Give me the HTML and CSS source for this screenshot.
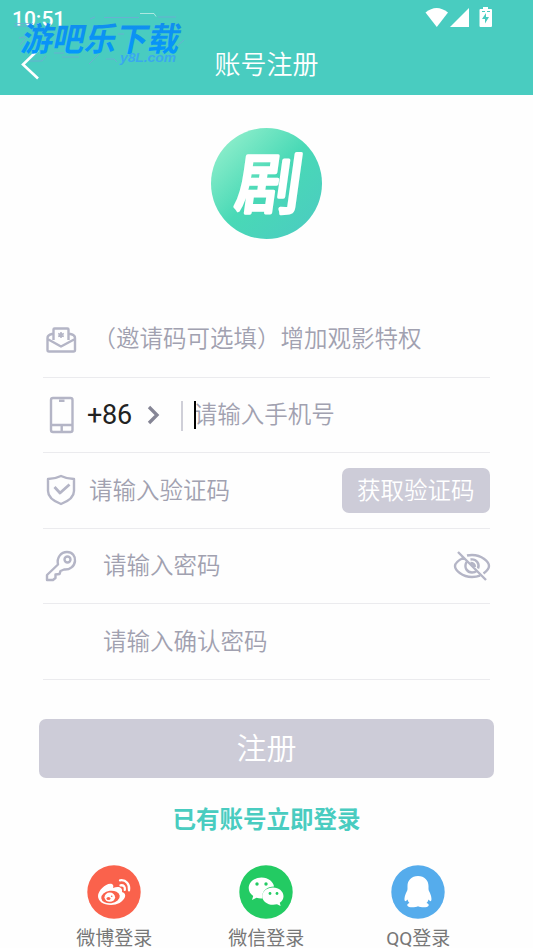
FILE: index.html
```html
<!DOCTYPE html>
<html lang="zh-CN">
<head>
<meta charset="utf-8">
<title>账号注册</title>
<link rel="stylesheet" href="styles.css">
</head>
<body>
<header class="header">
  <div class="status">
    <span class="time">10:51</span>
    <svg class="status-icons" width="68" height="22" viewBox="425 6 68 22" fill="#fff">
      <path d="M425.500 12.600Q436.500 3.500 448 12.600L436.800 27Z"/>
      <path d="M469 8v19h-19Z"/>
      <path fill-rule="evenodd" d="M483 7h5v2h3q1 0 1 1v16q0 1-1 1h-10.500q-1 0-1-1v-16q0-1 1-1h2.500ZM486 13l-4 6h3v4.500l4-6.500h-3ZM482 11v1h3v-1ZM487 11v1h3v-1Z"/>
    </svg>
  </div>
  <div class="titlebar">
    <svg class="back" width="20" height="32" viewBox="0 0 20 32" fill="none" stroke="#fff" stroke-width="2.600"><path d="M18 2 3 16.500 18 30.500"/></svg>
    <h1>账号注册</h1>
  </div>
  <div class="watermark">
    <svg width="240" height="80" viewBox="0 0 240 80">
      <defs><linearGradient id="wm" x1="0" y1="0" x2="0" y2="1"><stop offset="0" stop-color="#168be9"/><stop offset="1" stop-color="#0099ff"/></linearGradient></defs>
      <g fill="none" stroke="#71a8d5" stroke-width=".8"><path d="M15 23.500h18M14 26h15M19 38l6-1M20 45l6-7M30 61h12l4-5M90 19l5-2M104 17.500h35M158 17h18M177 46l7-6M62 57h17M89 64l10-10M106 59h8l3 3M54 53h10M118 34h6"/><path stroke="#c6eee8" d="M140 13.500h14l2 3"/></g>
      <text class="wm-name" transform="translate(20 50.500) skewX(-12)" textLength="158" lengthAdjust="spacingAndGlyphs" fill="url(#wm)">游吧乐下载</text>
      <text class="wm-site" x="120" y="61.500" textLength="56" lengthAdjust="spacingAndGlyphs">y8L.com</text>
    </svg>
  </div>
</header>
<main>
  <div class="logo">
    <svg width="111" height="111" viewBox="0 0 111 111">
      <defs><linearGradient id="lg" x1=".12" y1=".12" x2=".88" y2=".88"><stop offset="0" stop-color="#8bedca"/><stop offset=".5" stop-color="#49d9b6"/><stop offset="1" stop-color="#4bcebf"/></linearGradient></defs>
      <circle cx="55.500" cy="55.500" r="55.500" fill="url(#lg)"/>
      <text class="logo-text" transform="translate(22 80) skewX(-8)">剧</text>
    </svg>
  </div>
  <form class="form">
    <div class="row invite">
      <svg class="icon" width="36" height="36" viewBox="43 321 36 36"><path d="M53.500 340v-10.500q0-1 1-1h13q1 0 1 1v10.500M53 334h-1q-4.500 1-4.500 4v12q0 1.500 1.500 1.500h24.500q1.500 0 1.500-1.500v-12q0-3-4.500-4h-1M47.500 339l13.500 7.500 14-7.500"/><path stroke-width="1.600" d="M61 332v6M58.200 333.500l5.600 3M63.800 333.500l-5.600 3"/></svg>
      <span class="hint">（邀请码可选填）增加观影特权</span>
    </div>
    <div class="row phone">
      <svg class="icon" width="36" height="40" viewBox="44 395 36 40"><rect x="52" y="398" width="21.500" height="34" rx="2"/><path d="M52 425h21.500M60 400.700h5.500M62.700 426v5"/></svg>
      <span class="code">+86</span>
      <svg class="chev" width="14" height="20" viewBox="0 0 14 20"><path d="M2 2 10 10 2 18"/></svg>
      <span class="sep"></span><span class="caret"></span>
      <span class="hint">请输入手机号</span>
    </div>
    <div class="row verify">
      <svg class="icon" width="36" height="36" viewBox="43 473 36 36"><path d="M61 477q6 3 13 3v12q0 8-13 13-13-5-13-13v-12q7 0 13-3Z"/><path stroke-width="2.800" d="m54.500 488 5.500 6 9.500-8.500"/></svg>
      <span class="hint">请输入验证码</span>
      <button type="button" class="get">获取验证码</button>
    </div>
    <div class="row pass">
      <svg class="icon" width="36" height="36" viewBox="43 548 36 36"><path d="M58 564.500c-1.500-7 3-12.500 9-12.500 5.500 0 8.500 4.500 8 9-.5 5-5 9-11 8.500l-3.500 1.500-1 3-4 .5v3.500l-2.500 2h-6v-5Z"/><circle cx="67.500" cy="559.500" r="3"/></svg>
      <span class="hint">请输入密码</span>
      <svg class="icon eye" width="38" height="34" viewBox="453 549 38 34"><path d="M464 557.500c-5 2.500-9 6-9 8.500 0 4 7 11 17 11q4.500 0 8-1.300M467 555.500q2-.5 5-.5c10 0 17 7 17 11q0 3.500-5.500 7.500M466.500 562c-3 6 1 10.500 5.500 10.500q3 0 4.500-1.500M470.500 559.500c6-1 9.500 4.500 7.500 9M470.500 563q4 0 4.500 4M458 552l28 28"/></svg>
    </div>
    <div class="row confirm"><span class="hint">请输入确认密码</span></div>
    <button type="button" class="submit">注册</button>
  </form>
  <a class="login">已有账号立即登录</a>
  <div class="social">
    <div class="item">
      <svg width="54" height="54" viewBox="0 0 54 54"><circle cx="27" cy="27" r="26.700" fill="#fa624c"/><path fill="#fff" d="M11 31c0-6 9-14 14-12q2 1 1 4c5-2 10-1 9 4q4 1 3 5c-2 5-8 8-14 8-8 0-13-4-13-9Z"/><ellipse cx="23.500" cy="32" rx="9.300" ry="6.300" fill="#fa624c" transform="rotate(-7 23.500 32)"/><ellipse cx="22.800" cy="32.200" rx="5.300" ry="4.600" fill="#fff"/><ellipse cx="21.500" cy="33.500" rx="2" ry="1.600" fill="#fa624c"/><circle cx="24.700" cy="31.200" r=".8" fill="#fa624c"/><path fill="none" stroke="#fff" stroke-width="2.300" stroke-linecap="round" d="M33 15.300c6-1 10 4 9 10M33.500 20.300q5-.5 4.300 4.500"/></svg>
      <span>微博登录</span>
    </div>
    <div class="item">
      <svg width="54" height="54" viewBox="0 0 54 54"><circle cx="27" cy="27" r="26.700" fill="#23cb63"/><path fill="#fff" d="M22.500 12.500c7 0 12 4.500 12.500 9-7 0-13 5-11.500 12q-3 .3-6-.7l-4.500 2.200 1.200-4c-3-2-4.500-5-4.500-8 0-6 6-10.500 12.800-10.500Z"/><path fill="#fff" d="M34 22.500c6 0 10.500 4 10.500 8.700 0 3-1.500 5-3.700 6.500l.8 3.300-3.600-1.700c-8 2-14.800-2.500-14.800-8.100 0-4.700 4.800-8.700 10.800-8.700Z"/><g fill="#23cb63"><circle cx="18" cy="19" r="1.700"/><circle cx="27" cy="19" r="1.700"/><circle cx="31" cy="28.500" r="1.400"/><circle cx="38" cy="28.500" r="1.400"/></g></svg>
      <span>微信登录</span>
    </div>
    <div class="item">
      <svg width="54" height="54" viewBox="0 0 54 54"><circle cx="27" cy="27" r="26.700" fill="#55acec"/><path fill="#fff" d="M27 11c6.500 0 10.500 4.500 10.500 10v3q0 1.500 1 3c2 4 2.500 8 1.500 9-.8.500-1.800-.5-2.500-1.500q-.5 2-2 3.500c2 .8 2.500 1.500 2.200 2.500-.8 2.500-8 2.200-10.700.7-2.700 1.500-9.900 1.800-10.700-.7-.3-1 .2-1.700 2.200-2.500q-1.500-1.500-2-3.500c-.7 1-1.700 2-2.500 1.500-1-1-.5-5 1.500-9q1-1.500 1-3v-3c0-5.500 4-10 10.500-10Z"/></svg>
      <span>QQ登录</span>
    </div>
  </div>
</main>
</body>
</html>
```
FILE: styles.css
```css
* { box-sizing: border-box; }
html, body { margin: 0; height: 948px; overflow: hidden; }
body { background: #fefefe; font-family: Roboto, "Noto Sans CJK SC", sans-serif; }
svg { display: block; flex: none; }
button { border: 0; padding: 0; font-family: inherit; color: #fff; background: #cdccd8; border-radius: 7px; }
.header { position: relative; height: 95px; background: #49ccc0; color: #fff; }
.status { display: flex; justify-content: space-between; height: 34px; padding: 6px 40px 0 12px; }
.time { font-size: 21px; line-height: 26px; font-weight: 500; }
.titlebar { display: grid; grid-template-columns: 60px 1fr 60px; align-items: center; height: 60px; }
.back { margin-left: 20px; }
h1 { margin: 0; padding-top: 1px; font-size: 26px; font-weight: 350; line-height: 38px; text-align: center; }
.watermark { position: absolute; left: 0; top: 0; }
.wm-name { font: 700 33px "Noto Sans CJK SC", sans-serif; }
.wm-site { font: italic 700 13px "Liberation Sans", sans-serif; fill: #39a8ef; }
.logo { display: flex; justify-content: center; height: 207px; padding-top: 33px; }
.logo-text { font: 400 66px "Noto Sans CJK SC", sans-serif; fill: #fff; stroke: #fff; stroke-width: 3.600; stroke-linejoin: round; }
.form { padding: 0 43px; }
.row { display: flex; align-items: center; height: 75.600px; border-bottom: 1px solid #ebebee; }
.icon { fill: none; stroke: #b4b5c6; stroke-width: 2.400; stroke-linejoin: round; }
.hint { padding-top: .3px; font-size: 23.500px; font-weight: 350; line-height: 34px; color: #a1a1b0; white-space: nowrap; }
.invite .hint { margin-left: 13.500px; }
.code { margin-left: 8px; font-size: 27px; color: #222; letter-spacing: -.3px; }
.chev { margin-left: 15px; fill: none; stroke: #858595; stroke-width: 3.300; }
.sep { width: 2px; height: 30px; margin: 2px 0 0 20px; background: #cfcfd8; }
.caret { position: relative; z-index: 1; width: 2px; height: 28px; margin: 0 -2px 0 11px; background: #000; }
.verify .hint { margin-left: 10px; }
.get { width: 148.500px; height: 45px; margin-left: auto; padding-top: 1px; font-size: 23.500px; font-weight: 350; line-height: 44px; }
.pass .hint { margin-left: 24px; }
.eye { margin-left: auto; margin-right: -1px; }
.confirm .hint { margin-left: 60px; }
.submit { display: block; width: 454.500px; height: 59px; margin: 39px 0 0 -3.700px; padding-top: 1px; font-size: 30px; font-weight: 350; line-height: 58px; }
.login { display: block; margin-top: 25px; text-align: center; font-size: 23.500px; line-height: 34px; font-weight: 700; color: #49ccc0; }
.social { display: grid; grid-template-columns: repeat(3, 152px); justify-content: center; margin: 28px .5px 0 0; }
.item { display: flex; flex-direction: column; align-items: center; font-size: 19px; font-weight: 400; line-height: 28px; color: #777; }
.item span { margin-top: 6px; }
```
